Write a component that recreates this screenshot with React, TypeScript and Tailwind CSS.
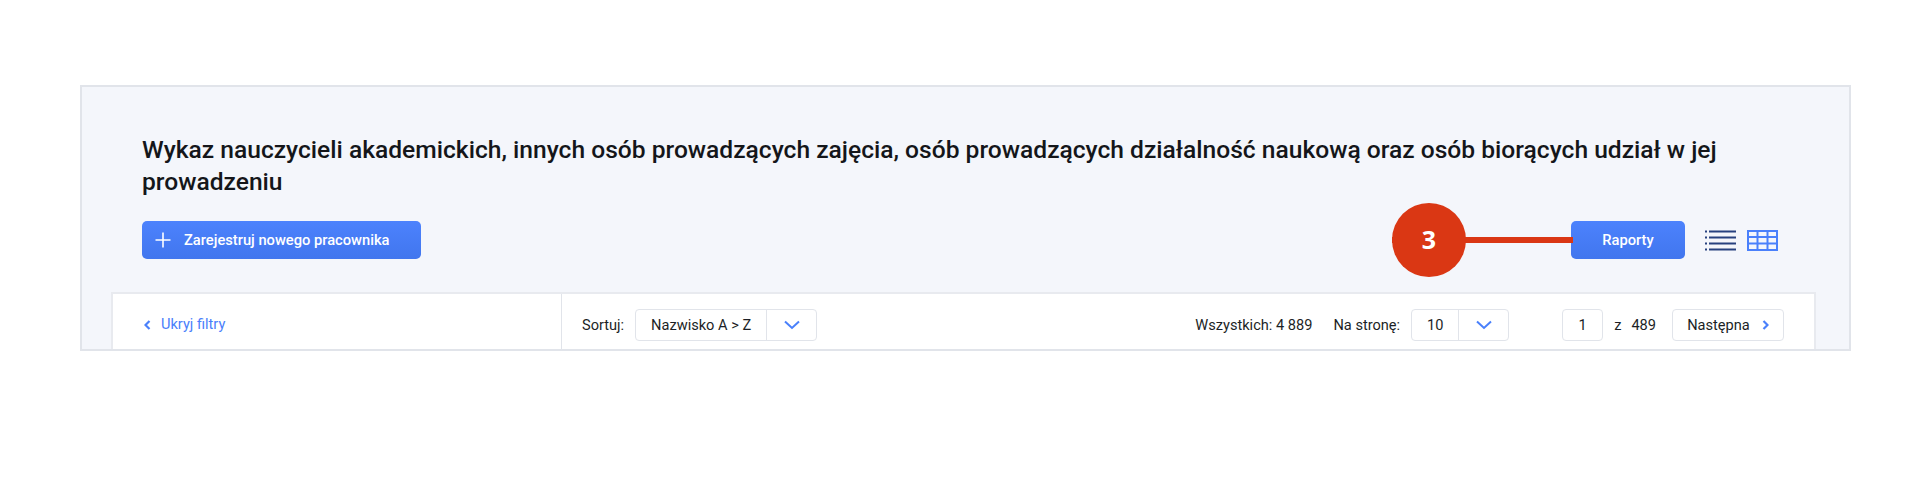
import React from "react";

const Chevron = ({ dir, className }: { dir: "left" | "right" | "down"; className?: string }) => {
  if (dir === "down")
    return (
      <svg width="16" height="10" viewBox="0 0 16 10" fill="none" className={className}>
        <path d="M1 1.500 8 8l7-6.500" stroke="#4a80fb" strokeWidth="2" />
      </svg>
    );
  return (
    <svg width="7" height="10" viewBox="0 0 7 10" fill="none" className={className}>
      <path d={dir === "left" ? "M5.500 1 1.500 5l4 4" : "M1.500 1l4 4-4 4"} stroke="#4a80fb" strokeWidth="2.200" />
    </svg>
  );
};

const Select = ({ value, left, right }: { value: string; left: string; right: string }) => (
  <div className={`flex h-8 items-stretch rounded-[4px] border border-[#e1e4ea] bg-white ${left}`}>
    <div className={`flex items-center justify-center border-r border-[#e1e4ea] ${right}`}>{value}</div>
    <div className="flex flex-1 items-center justify-center">
      <Chevron dir="down" />
    </div>
  </div>
);

export default function App() {
  return (
    <div className="min-h-[496px] bg-white pt-[85px] pl-[80px] font-['Roboto',sans-serif]">
      <div className="relative h-[266px] w-[1771px] overflow-hidden border-2 border-[#e1e4ea] bg-[#f4f6fb]">
        <div className="pt-[47px] pl-[60px] pr-[60px]">
          <h1 className="text-[24.6px] leading-[32px] font-medium text-[#14161a]">
            Wykaz nauczycieli akademickich, innych osób prowadzących zajęcia, osób prowadzących działalność naukową oraz osób biorących udział w jej prowadzeniu
          </h1>
          <div className="mt-[23px] flex items-center">
            <button className="flex h-[38px] w-[279px] items-center rounded-[5px] bg-gradient-to-b from-[#4c82fd] to-[#4176ee] pl-[13px] text-[14.7px] font-medium text-white">
              <svg width="16" height="16" viewBox="0 0 16 16" fill="none" className="mr-[13px]">
                <path d="M8 .5v15M.5 8h15" stroke="#fff" strokeWidth="1.600" />
              </svg>
              Zarejestruj nowego pracownika
            </button>
            <button className="ml-auto h-[38px] w-[114px] rounded-[5px] bg-gradient-to-b from-[#4c82fd] to-[#4176ee] text-[14.7px] font-medium text-white">
              Raporty
            </button>
            <svg width="31" height="21" viewBox="0 0 31 21" className="ml-[20px]" fill="none">
              <path d="M0 1.500h2M4 1.500h27M0 7.500h2M4 7.500h27M0 13.500h2M4 13.500h27M0 19.500h2M4 19.500h27" stroke="#27417f" strokeWidth="2" />
            </svg>
            <svg width="31" height="21" viewBox="0 0 31 21" className="ml-[11px] mr-[11px]" fill="none">
              <path d="M1 1h29v19H1zM0 7h31M0 13.500h31M10.500 1v19M20.500 1v19" stroke="#4a80fb" strokeWidth="2" />
            </svg>
          </div>
        </div>

        <div className="mt-[33px] ml-[29px] flex h-[80px] w-[1705px] border-2 border-[#e8eaef] bg-white text-[14.6px] text-[#1c1f26]">
          <div className="flex w-[449px] items-start border-r border-[#e1e4ea] pt-[15px] pl-[31px] text-[#4a80fb]">
            <div className="flex h-8 items-center">
              <Chevron dir="left" className="mr-[10px]" />
              Ukryj filtry
            </div>
          </div>
          <div className="flex flex-1 items-start pt-[15px] pl-[20px] leading-[32px]">
            <span>Sortuj:</span>
            <Select value="Nazwisko A > Z" left="ml-[11px] w-[182px]" right="w-[131px]" />
            <span className="ml-auto">Wszystkich: 4 889</span>
            <span className="ml-[21px]">Na stronę:</span>
            <Select value="10" left="ml-[11px] w-[98px]" right="w-[47px]" />
            <div className="ml-[53px] flex h-8 w-[41px] items-center justify-center rounded-[4px] border border-[#e1e4ea]">1</div>
            <span className="ml-[11px]">z</span>
            <span className="ml-[10px]">489</span>
            <button className="ml-[16px] mr-[30px] flex h-8 w-[112px] items-center justify-center gap-[12px] rounded-[4px] border border-[#e1e4ea]">
              Następna
              <Chevron dir="right" />
            </button>
          </div>
        </div>

        <div className="absolute left-[1310px] top-[150px] h-[6px] w-[181px] bg-[#da3714]" />
        <div className="absolute left-[1310px] top-[116px] flex h-[74px] w-[74px] items-center justify-center rounded-full bg-[#da3714] font-['Open_Sans',sans-serif] text-[25px] font-bold text-white">
          3
        </div>
      </div>
    </div>
  );
}
